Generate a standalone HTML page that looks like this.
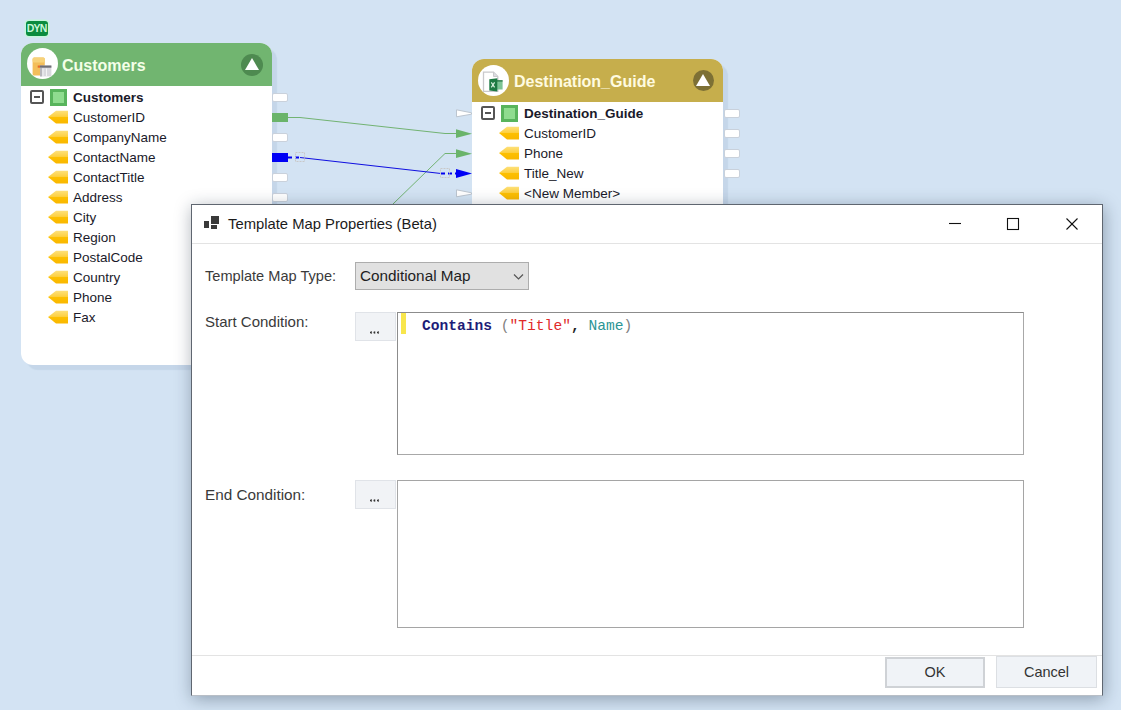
<!DOCTYPE html>
<html><head><meta charset="utf-8">
<style>
*{box-sizing:border-box;margin:0;padding:0}
html,body{width:1121px;height:710px;overflow:hidden}
body{background:#d3e3f3;position:relative;font-family:"Liberation Sans",sans-serif}
.abs{position:absolute}
.dyn{left:26px;top:21px;width:22px;height:15px;background:#0b8c3e;border-radius:3px;color:#c9f7d9;font-size:10.5px;font-weight:bold;line-height:15px;text-align:center;box-shadow:0 0 0 1.5px #c6f5dc;letter-spacing:-0.9px;text-indent:-0.8px}
.node{background:#fff;border-radius:12px 12px 0 0;box-shadow:5px 5px 1px rgba(60,90,130,0.09)}
.hdr{position:absolute;left:0;top:0;right:0;border-radius:12px 12px 0 0}
.hdr .ttl{position:absolute;font-weight:bold;font-size:16px;color:#f4ffe8;white-space:nowrap}
.circ{position:absolute;width:31px;height:31px;border-radius:50%;background:#fff}
.coll{position:absolute;width:22px;height:22px;border-radius:50%}
.coll:after{content:"";position:absolute;left:3.7px;top:3.6px;border-left:7.3px solid transparent;border-right:7.3px solid transparent;border-bottom:12.3px solid #fff}
.row{position:absolute;font-size:13.5px;color:#1a1a2a;white-space:nowrap;line-height:16px}
.tag{position:absolute;width:20px;height:12px}
.cb{position:absolute;width:14px;height:14px;border:2px solid #555;border-radius:2px;background:#fff}
.cb:after{content:"";position:absolute;left:2px;top:4px;width:6px;height:2px;background:#555}
.gsq{position:absolute;width:17px;height:17px;background:#8fdc8f;border:3px solid #58b45c}
.port{position:absolute;width:16px;height:9px;background:#fff;border:1px solid #c9d1db;border-radius:2px}
.dlg{left:191px;top:204px;width:912px;height:492px;background:#fff;border:1px solid #5f6670;border-bottom-color:#b8bec6;box-shadow:1px 3px 16px rgba(20,35,55,0.36)}
.lbl{position:absolute;font-size:14.3px;color:#3a3a3a;white-space:nowrap}
.btn3{position:absolute;width:41px;height:29px;background:#f1f3f6;border:1px solid #e0e3e8;font-size:12px;color:#333;text-align:center;line-height:26px}
.box{position:absolute;border:1px solid #a5a5a5;background:#fff}
.dots{position:absolute;left:14px;top:18px;width:10px;height:3px;background:radial-gradient(circle at 1px 1.5px,#333 1px,transparent 1.2px) 0 0/3.5px 3px repeat-x}
.code{font-family:"Liberation Mono",monospace;font-size:14.6px;line-height:20px;white-space:pre}
.dbtn{background:#f0f3f7;font-size:14.5px;color:#333;text-align:center;display:flex;align-items:center;justify-content:center;padding-bottom:1px}
</style></head><body>
<div class="abs dyn">DYN</div>

<!-- Customers node -->
<div class="abs node" style="left:21px;top:43px;width:251px;height:322px;border-radius:12px 12px 0 12px">
  <div class="hdr" style="height:43px;background:#71b570">
    <div class="circ" style="left:6px;top:5px"><svg class="abs" style="left:0;top:0" width="31" height="31" viewBox="0 0 31 31">
<rect x="5.6" y="9.6" width="12.2" height="17.8" rx="1.5" fill="#f3be5a"/>
<rect x="5.6" y="9.6" width="12.2" height="5" rx="1.5" fill="#f7d27a"/>
<rect x="10.7" y="17.5" width="5.6" height="2.2" fill="#e66a2c"/>
<rect x="13" y="17.5" width="11.4" height="10.9" fill="#d9d9de"/>
<rect x="13" y="17.5" width="11.4" height="2.2" fill="#6d6d75"/>
<rect x="15.5" y="20.5" width="1" height="7.5" fill="#f4f4f6"/>
<rect x="19" y="20.5" width="1" height="7.5" fill="#f4f4f6"/>
<rect x="13" y="20" width="2" height="8.4" fill="#b7b7bd"/>
</svg></div>
    <div class="ttl" style="left:41px;top:14px">Customers</div>
    <div class="coll" style="left:220px;top:11px;background:#4e8a50"></div>
  </div>
</div>

<!-- Destination node -->
<div class="abs node" style="left:472px;top:59px;width:251px;height:200px">
  <div class="hdr" style="height:43px;background:#c6ae4c">
    <div class="circ" style="left:6px;top:6px"><svg class="abs" style="left:0;top:0" width="31" height="31" viewBox="0 0 31 31">
<path d="M5.5 7.2 H15.5 L19.8 11.5 V26.4 H5.5 Z" fill="#fff" stroke="#c9c9cc" stroke-width="1.3"/>
<path d="M15.5 7.2 V11.5 H19.8" fill="#dcdce0" stroke="#c9c9cc" stroke-width="1"/>
<rect x="19" y="15.3" width="5.6" height="9.2" fill="#7cc495"/>
<rect x="19" y="15.3" width="5.6" height="1.2" fill="#1e6e3e"/>
<path d="M11.3 14.3 L19.3 13.2 V26.6 L11.3 25.5 Z" fill="#1d7a43"/>
<path d="M13.3 17.3 L16.6 22.4 M16.6 17.3 L13.3 22.4" stroke="#d8f0de" stroke-width="1.2"/>
</svg></div>
    <div class="ttl" style="left:42px;top:14px;color:#fffbe0">Destination_Guide</div>
    <div class="coll" style="left:220.5px;top:11px;width:21px;height:21px;background:#7d7035"></div>
  </div>
</div>

<svg class="abs" style="left:0;top:0" width="1121" height="710">
<defs>
<linearGradient id="tgg" x1="0" y1="0" x2="0" y2="1"><stop offset="0" stop-color="#fde07a"/><stop offset="0.45" stop-color="#fdd043"/><stop offset="0.5" stop-color="#fdc000"/><stop offset="1" stop-color="#f9b700"/></linearGradient>
<symbol id="tg" viewBox="0 0 21 14"><polygon points="0,7.1 8,0.8 20,0.8 20,13.4 8,13.4" fill="url(#tgg)"/></symbol>
</defs>
<!-- lines -->
<polyline points="288,117.5 300,117.5 445,133.5 458,133.5" fill="none" stroke="#72b372" stroke-width="1"/>
<polyline points="300,320 393,204 445,153.5 458,153.5" fill="none" stroke="#72b372" stroke-width="1"/>
<polyline points="300,157.5 441,173.5" fill="none" stroke="#1010e0" stroke-width="1.2"/>
<line x1="288" y1="157.5" x2="300" y2="157.5" stroke="#0000f0" stroke-width="2" stroke-dasharray="4 3"/>
<line x1="441" y1="173.5" x2="458" y2="173.5" stroke="#0000f0" stroke-width="2" stroke-dasharray="4 3"/>
<rect x="295.5" y="152.5" width="9" height="9" fill="none" stroke="#c8c8c8" stroke-width="1" stroke-dasharray="2 1"/>
<rect x="440.5" y="168.5" width="9" height="9" fill="none" stroke="#c8c8c8" stroke-width="1" stroke-dasharray="2 1"/>
<polygon points="456,129.3 472,133.7 456,138.1" fill="#6ab46a"/>
<polygon points="456,149.3 472,153.7 456,158.1" fill="#6ab46a"/>
<polygon points="456,169.1 472,173.5 456,177.9" fill="#0000f5"/>
<polygon points="456.5,109.8 471.5,112.8 471.5,114.2 456.5,116.8" fill="#fff" stroke="#bcc5cf" stroke-width="1"/>
<polygon points="456.5,189.8 471.5,192.8 471.5,194.2 456.5,196.8" fill="#fff" stroke="#bcc5cf" stroke-width="1"/>
</svg>
<div class="port" style="left:272px;top:93px"></div>
<div class="port" style="left:272px;top:113px;background:#6ab46a;border-color:#6ab46a;border-radius:0"></div>
<div class="port" style="left:272px;top:133px"></div>
<div class="port" style="left:272px;top:153px;background:#0000f5;border-color:#0000f5;border-radius:0"></div>
<div class="port" style="left:272px;top:173px"></div>
<div class="port" style="left:272px;top:193px"></div>
<div class="port" style="left:272px;top:213px"></div>
<div class="port" style="left:272px;top:233px"></div>
<div class="port" style="left:272px;top:253px"></div>
<div class="port" style="left:272px;top:273px"></div>
<div class="port" style="left:272px;top:293px"></div>
<div class="port" style="left:272px;top:313px"></div>
<div class="port" style="left:724px;top:109px"></div>
<div class="port" style="left:724px;top:129px"></div>
<div class="port" style="left:724px;top:149px"></div>
<div class="port" style="left:724px;top:169px"></div>
<div class="cb abs" style="left:30px;top:90px"></div>
<div class="gsq abs" style="left:50px;top:89px"></div>
<div class="row" style="left:73px;top:90px;font-weight:bold">Customers</div>
<svg class="abs" style="left:48px;top:110px" width="21" height="14"><use href="#tg"/></svg>
<div class="row" style="left:73px;top:110px">CustomerID</div>
<svg class="abs" style="left:48px;top:130px" width="21" height="14"><use href="#tg"/></svg>
<div class="row" style="left:73px;top:130px">CompanyName</div>
<svg class="abs" style="left:48px;top:150px" width="21" height="14"><use href="#tg"/></svg>
<div class="row" style="left:73px;top:150px">ContactName</div>
<svg class="abs" style="left:48px;top:170px" width="21" height="14"><use href="#tg"/></svg>
<div class="row" style="left:73px;top:170px">ContactTitle</div>
<svg class="abs" style="left:48px;top:190px" width="21" height="14"><use href="#tg"/></svg>
<div class="row" style="left:73px;top:190px">Address</div>
<svg class="abs" style="left:48px;top:210px" width="21" height="14"><use href="#tg"/></svg>
<div class="row" style="left:73px;top:210px">City</div>
<svg class="abs" style="left:48px;top:230px" width="21" height="14"><use href="#tg"/></svg>
<div class="row" style="left:73px;top:230px">Region</div>
<svg class="abs" style="left:48px;top:250px" width="21" height="14"><use href="#tg"/></svg>
<div class="row" style="left:73px;top:250px">PostalCode</div>
<svg class="abs" style="left:48px;top:270px" width="21" height="14"><use href="#tg"/></svg>
<div class="row" style="left:73px;top:270px">Country</div>
<svg class="abs" style="left:48px;top:290px" width="21" height="14"><use href="#tg"/></svg>
<div class="row" style="left:73px;top:290px">Phone</div>
<svg class="abs" style="left:48px;top:310px" width="21" height="14"><use href="#tg"/></svg>
<div class="row" style="left:73px;top:310px">Fax</div>
<div class="cb abs" style="left:481px;top:106px"></div>
<div class="gsq abs" style="left:501px;top:105px"></div>
<div class="row" style="left:524px;top:106px;font-weight:bold">Destination_Guide</div>
<svg class="abs" style="left:499px;top:126px" width="21" height="14"><use href="#tg"/></svg>
<div class="row" style="left:524px;top:126px">CustomerID</div>
<svg class="abs" style="left:499px;top:146px" width="21" height="14"><use href="#tg"/></svg>
<div class="row" style="left:524px;top:146px">Phone</div>
<svg class="abs" style="left:499px;top:166px" width="21" height="14"><use href="#tg"/></svg>
<div class="row" style="left:524px;top:166px">Title_New</div>
<svg class="abs" style="left:499px;top:186px" width="21" height="14"><use href="#tg"/></svg>
<div class="row" style="left:524px;top:186px">&lt;New Member&gt;</div>
<!-- Dialog -->
<div class="abs dlg">
<svg class="abs" style="left:12px;top:10px" width="16" height="15" viewBox="0 0 16 15"><rect x="0" y="6" width="5" height="7" fill="#3a3a3a"/><rect x="7" y="1" width="8" height="8" fill="#3a3a3a"/><rect x="7" y="10" width="6" height="4" fill="#3a3a3a"/></svg>
<div class="lbl" style="left:36px;top:9px;font-size:14.8px;line-height:20px;color:#1b1b1b">Template Map Properties (Beta)</div>
<svg class="abs" style="left:748px;top:5px" width="150" height="26">
 <line x1="9" y1="13.5" x2="21" y2="13.5" stroke="#111" stroke-width="1.1"/>
 <rect x="67.5" y="8.5" width="11" height="11" fill="none" stroke="#111" stroke-width="1.1"/>
 <line x1="126.5" y1="8.5" x2="137.5" y2="19.5" stroke="#111" stroke-width="1.1"/>
 <line x1="137.5" y1="8.5" x2="126.5" y2="19.5" stroke="#111" stroke-width="1.1"/>
</svg>
<div class="abs" style="left:0px;top:38px;width:910px;height:1px;background:#e3e3e3"></div>
<div class="lbl" style="left:13px;top:61px;line-height:20px;font-size:14.6px">Template Map Type:</div>
<div class="abs" style="left:163px;top:57px;width:174px;height:28px;background:#e1e1e1;border:1px solid #adadad"></div>
<div class="lbl" style="left:168px;top:61px;line-height:20px;color:#1e1e1e;font-size:15.3px">Conditional Map</div>
<svg class="abs" style="left:321px;top:68px" width="12" height="8"><polyline points="1,1.5 5.5,6 10,1.5" fill="none" stroke="#555" stroke-width="1.2"/></svg>
<div class="lbl" style="left:13px;top:107px;line-height:20px;font-size:15px">Start Condition:</div>
<div class="btn3" style="left:163px;top:107px"><span class="dots"></span></div>
<div class="box" style="left:205px;top:107px;width:627px;height:143px;border-color:#8c8c8c #a8a8a8 #a8a8a8 #8c8c8c"></div>
<div class="abs" style="left:209px;top:108px;width:5px;height:21px;background:#f8e64c"></div>
<div class="abs code" style="left:230px;top:111px"><b style="color:#1d1d78">Contains</b> <span style="color:#808080">(</span><span style="color:#e02a2a">"Title"</span><b style="color:#222">,</b> <span style="color:#2b9595">Name</span><span style="color:#808080">)</span></div>
<div class="lbl" style="left:13px;top:280px;line-height:20px;font-size:15.3px">End Condition:</div>
<div class="btn3" style="left:163px;top:275px"><span class="dots"></span></div>
<div class="box" style="left:205px;top:275px;width:627px;height:148px"></div>
<div class="abs" style="left:0px;top:450px;width:910px;height:1px;background:#e3e3e3"></div>
<div class="abs dbtn" style="left:693px;top:452px;width:100px;height:31px;border:2px solid #cfd2d6">OK</div>
<div class="abs dbtn" style="left:804px;top:451px;width:101px;height:32px;border:1px solid #dcdfe3">Cancel</div>
</div>
</body></html>
